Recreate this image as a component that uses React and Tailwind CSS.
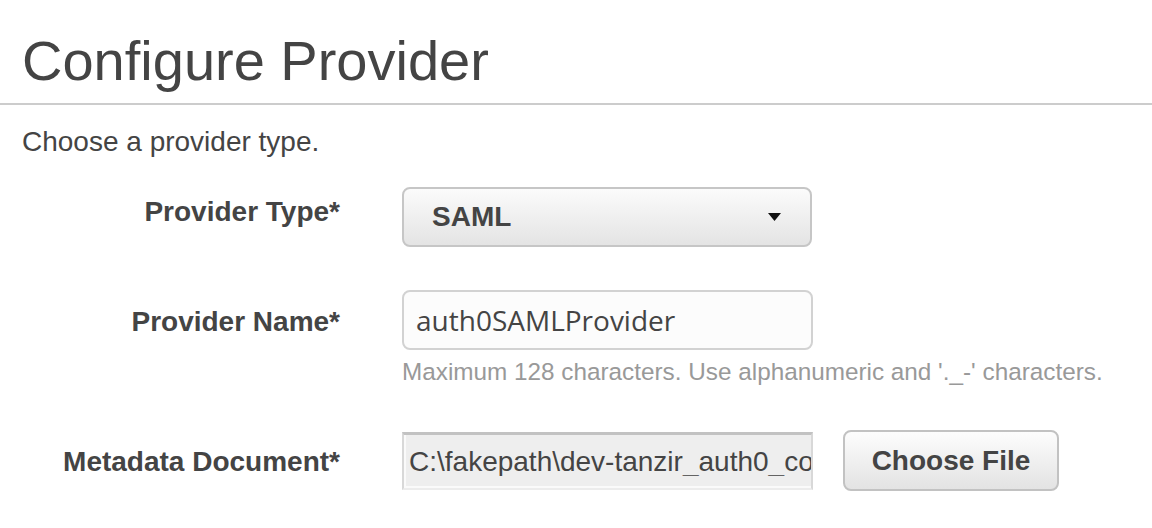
import React from 'react';

const base = { fontFamily: '"Liberation Sans", Arial, sans-serif' };

function Caret() {
  return (
    <svg width="13" height="8" viewBox="0 0 13 8" className="block">
      <path d="M0 0 H13 L6.5 8 Z" fill="#111" />
    </svg>
  );
}

export default function App() {
  return (
    <div className="min-h-screen bg-white text-[#444]" style={base}>
      {/* Header */}
      <div className="pl-[22px] pt-[33px] pb-[14px] border-b-2 border-[#cccccc]">
        <h1 className="text-[56px] leading-[56px] font-normal text-[#444]">Configure Provider</h1>
      </div>

      <div className="pl-[22px]">
        <p className="mt-[23px] text-[28px] leading-[28px]">Choose a provider type.</p>

        <div className="mt-[31px] grid grid-cols-[318px_1fr] gap-x-[62px]">
          {/* Provider Type */}
          <div className="pt-[11px] text-right text-[28px] leading-[28px] font-bold">Provider Type*</div>
          <div>
            <div className="w-[410px] h-[60px] rounded-[8px] border-2 border-[#c6c6c6] bg-gradient-to-b from-[#fbfbfb] to-[#e4e4e4] flex items-center justify-between pl-[28px] pr-[29px]">
              <span className="text-[28px] leading-[28px] font-bold">SAML</span>
              <Caret />
            </div>
          </div>

          {/* Provider Name */}
          <div className="mt-[43px] pt-[18px] text-right text-[28px] leading-[28px] font-bold">Provider Name*</div>
          <div className="mt-[43px]">
            <div className="w-[411px] h-[60px] rounded-[8px] border-2 border-[#d2d2d2] bg-[#fcfcfc] flex items-center pl-[12px]">
              <span className="text-[28px] leading-[28px] text-[#444]" style={{ fontFamily: '"Open Sans", "Noto Sans", sans-serif' }}>auth0SAMLProvider</span>
            </div>
            <p className="mt-[10px] text-[24.3px] leading-[24px] text-[#999]">Maximum 128 characters. Use alphanumeric and '._-' characters.</p>
          </div>

          {/* Metadata Document */}
          <div className="mt-[46px] pt-[18px] text-right text-[28px] leading-[28px] font-bold">Metadata Document*</div>
          <div className="mt-[46px] flex items-start gap-[30px]">
            <div className="mt-[2px] w-[411px] h-[58px] border-2 border-t-[3px] border-t-[#c2c2c2] border-x-[#d8d8d8] border-b-[#ececec] bg-[#eeeeee] shadow-[inset_2px_-2px_0_#fafafa] flex items-center pl-[5px]">
              <span className="block w-full overflow-hidden whitespace-nowrap text-[28px] leading-[28px] text-[#444]">C:\fakepath\dev-tanzir_auth0_config.xml</span>
            </div>
            <div className="w-[216px] h-[61px] rounded-[8px] border-2 border-[#c2c2c2] bg-gradient-to-b from-[#fdfdfd] to-[#e3e3e3] flex items-center justify-center">
              <span className="text-[28px] leading-[28px] font-bold">Choose File</span>
            </div>
          </div>
        </div>
      </div>
    </div>
  );
}
